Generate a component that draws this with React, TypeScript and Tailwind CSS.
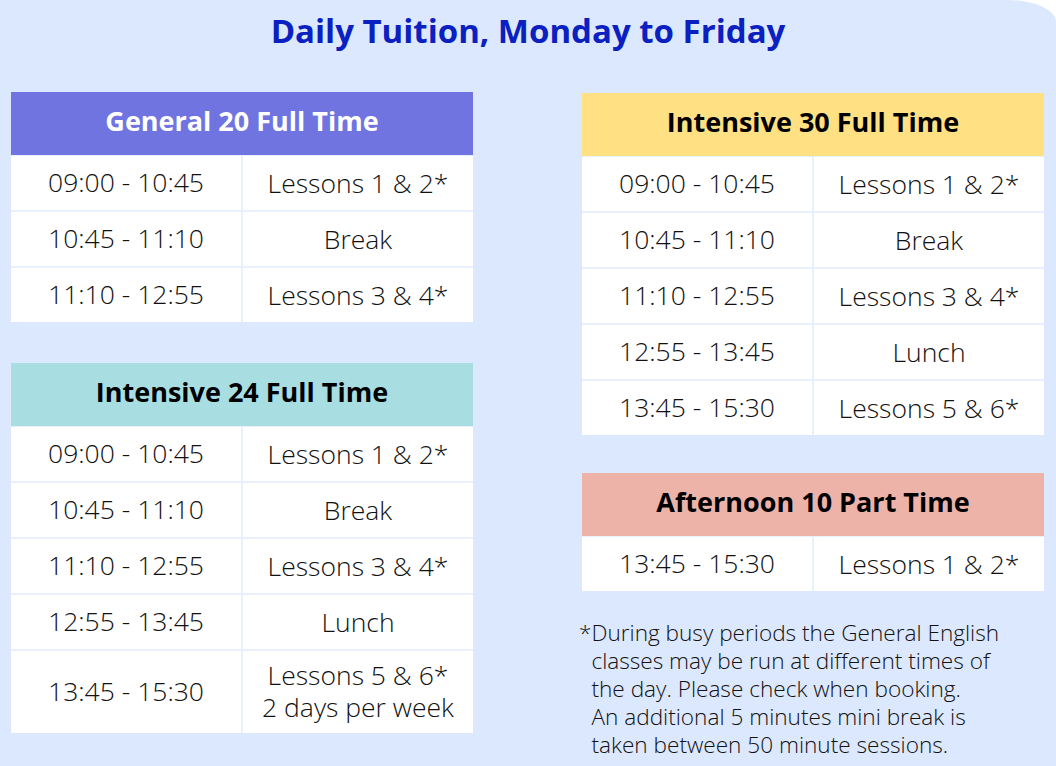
import React from 'react';

type Row = { time: string; label: React.ReactNode; tall?: boolean };

const fullDay: Row[] = [
    { time: '09:00 - 10:45', label: 'Lessons 1 & 2*' },
    { time: '10:45 - 11:10', label: 'Break' },
    { time: '11:10 - 12:55', label: 'Lessons 3 & 4*' },
    { time: '12:55 - 13:45', label: 'Lunch' },
];

const ScheduleTable: React.FC<{ title: string; headerClass: string; rows: Row[] }> = ({ title, headerClass, rows }) => (
    <div className="w-[462px] bg-[#e8f0fe]">
        <div className={`h-[63px] pb-[4px] flex items-center justify-center text-[27px] font-bold ${headerClass}`}>{title}</div>
        <div className="grid grid-cols-2 gap-[2px] pt-px">
            {rows.map((r, i) => (
                <React.Fragment key={i}>
                    <div className={`bg-white flex items-center justify-center ${r.tall ? 'h-[82px]' : 'h-[54px]'}`}>{r.time}</div>
                    <div className={`bg-white flex items-center justify-center text-center leading-[32px] ${r.tall ? 'h-[82px] pb-[2px]' : 'h-[54px]'}`}>{r.label}</div>
                </React.Fragment>
            ))}
        </div>
    </div>
);

export default function App() {
    return (
        <div className="w-[1056px] h-[766px] bg-white">
            <div
                className="h-full bg-[#dce8fd] rounded-tr-[48px_22px] px-[11px] text-[#111111] text-[26.5px] font-light"
                style={{ fontFamily: '"Open Sans", "Noto Sans", sans-serif' }}
            >
                <h1 className="pt-[9px] h-[92px] text-center text-[33px] font-bold text-[#0a20c0] leading-[44px]">
                    Daily Tuition, Monday to Friday
                </h1>
                <div className="flex justify-between pr-px">
                    <div className="flex flex-col gap-[41px]">
                        <ScheduleTable
                            title="General 20 Full Time"
                            headerClass="bg-[#7074e0] text-white"
                            rows={fullDay.slice(0, 3)}
                        />
                        <ScheduleTable
                            title="Intensive 24 Full Time"
                            headerClass="bg-[#a8dee2] text-black"
                            rows={[
                                ...fullDay,
                                { time: '13:45 - 15:30', label: <>Lessons 5 &amp; 6*<br />2 days per week</>, tall: true },
                            ]}
                        />
                    </div>
                    <div className="flex flex-col pt-px">
                        <ScheduleTable
                            title="Intensive 30 Full Time"
                            headerClass="bg-[#ffe082] text-black"
                            rows={[...fullDay, { time: '13:45 - 15:30', label: 'Lessons 5 & 6*' }]}
                        />
                        <div className="mt-[38px]">
                            <ScheduleTable
                                title="Afternoon 10 Part Time"
                                headerClass="bg-[#edb3a8] text-black"
                                rows={[{ time: '13:45 - 15:30', label: 'Lessons 1 & 2*' }]}
                            />
                        </div>
                        <div className="mt-[28px] -ml-[3px] text-[22.6px] leading-[28px] flex">
                            <span>*</span>
                            <p>
                                During busy periods the General English
                                <br />classes may be run at different times of
                                <br />the day. Please check when booking.
                                <br />An additional 5 minutes mini break is
                                <br />taken between 50 minute sessions.
                            </p>
                        </div>
                    </div>
                </div>
            </div>
        </div>
    );
}
